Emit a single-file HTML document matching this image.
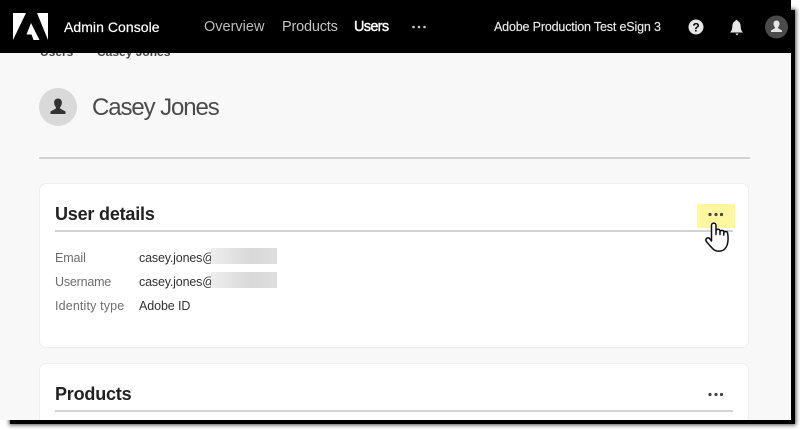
<!DOCTYPE html>
<html><head><meta charset="utf-8"><style>
html,body{margin:0;padding:0;background:#fff}
body{width:800px;height:430px;overflow:hidden;position:relative;font-family:"Liberation Sans",sans-serif}
.t{position:absolute;white-space:nowrap;line-height:1}
.shadow{position:absolute;left:10px;top:10px;width:785px;height:414px;background:#000;box-shadow:0 0 4px 1px rgba(0,0,0,.7)}
.page{position:absolute;left:0;top:0;width:791px;height:420px;background:#f8f8f8;overflow:hidden}
.inner{position:absolute;left:0;top:0;width:791px;height:420px;filter:blur(.35px)}
.hdr{position:absolute;left:0;top:0;width:791px;height:53px;background:#000}
.card{position:absolute;left:39px;width:710px;background:#fff;border:1px solid #eee;border-radius:7px;box-sizing:border-box}
.rule{position:absolute;left:55px;width:678px;background:#d3d3d3}
.l{color:#6e6e6e;font-size:12.5px}.v{color:#333;font-size:12.5px}
.blur{position:absolute;left:211px;width:66px;height:16px;background:linear-gradient(90deg,#eee,#d8d8d8 60%,#dedede)}
svg{position:absolute;overflow:visible}
</style></head><body>
<div class="shadow"></div>
<div class="page"><div class="inner">
<div class="t" style="left:40px;top:46px;font-size:12px;color:#444;font-weight:bold">Users</div>
<div class="t" style="left:97px;top:46px;font-size:12px;color:#444;font-weight:bold">Casey Jones</div>
<div class="hdr"></div>
<svg style="left:0;top:0" width="791" height="53"><path fill="#fff" d="M13 13h13L13 40zM37 13h11v27zM31 23l8.500 17h-6l-2-5.500h-5z"/></svg>
<div class="t" style="left:64px;top:20px;font-size:14px;color:#fff;letter-spacing:.05px;-webkit-text-stroke:.2px #fff">Admin Console</div>
<div class="t" style="left:204px;top:20px;font-size:14.5px;color:#bdbdbd">Overview</div>
<div class="t" style="left:282px;top:20px;font-size:14.5px;color:#c4c4c4;letter-spacing:-.2px">Products</div>
<div class="t" style="left:354px;top:20px;font-size:14.5px;color:#fff;letter-spacing:-.7px;-webkit-text-stroke:.4px #fff">Users</div>
<svg style="left:0;top:0" width="791" height="53"><g fill="#c8c8c8"><circle cx="413.500" cy="27" r="1.300"/><circle cx="419" cy="27" r="1.300"/><circle cx="424.500" cy="27" r="1.300"/></g></svg>
<div class="t" style="left:494px;top:21px;font-size:12.5px;color:#eaeaea;letter-spacing:-.16px;-webkit-text-stroke:.15px #eaeaea">Adobe Production Test eSign 3</div>
<svg style="left:0;top:0" width="791" height="53">
<circle cx="696" cy="27" r="7.500" fill="#e6e6e6"/>
<text x="696" y="31.500" text-anchor="middle" font-family="Liberation Sans" font-weight="bold" font-size="12" fill="#000">?</text>
<path fill="#e6e6e6" d="M730 32.500c2-2 2.200-4 2.400-7 .2-2.500 1.500-4 3-4.500.2-1.600 2-1.600 2.200 0 1.500.5 2.800 2 3 4.500.2 3 .4 5 2.400 7zM735.300 33.500h3.400l-1.700 2z"/>
<circle cx="776.500" cy="27" r="11.500" fill="#4b4b4b"/>
<path fill="#e6e6e6" d="M776.500 20.500c2 0 3 1.500 3 3.300 0 1.500-.7 2.700-1.400 3.500v1l3.900 2.200v1.500h-11v-1.500l3.900-2.200v-1c-.7-.8-1.400-2-1.400-3.500 0-1.800 1-3.300 3-3.300z"/>
</svg>
<svg style="left:0;top:0" width="120" height="130">
<circle cx="58" cy="107" r="19" fill="#d9d9d9"/>
<path fill="#333" d="M58 98.500c2.700 0 3.900 2 3.900 4.300 0 2-1 3.500-1.800 4.500v1.200l5.400 3v2.500h-15v-2.500l5.400-3v-1.200c-.8-1-1.800-2.500-1.800-4.500 0-2.300 1.200-4.300 3.900-4.300z"/>
</svg>
<div class="t" style="left:92px;top:96px;font-size:24px;color:#4b4b4b;letter-spacing:-1.1px">Casey Jones</div>
<div style="position:absolute;left:39px;top:157px;width:711px;height:2px;background:#d2d2d2"></div>

<div class="card" style="top:183px;height:165px"></div>
<div class="t" style="left:55px;top:205px;font-size:18px;color:#222;font-weight:bold;letter-spacing:-.2px">User details</div>
<div class="rule" style="top:230px;height:2px"></div>
<div class="t l" style="left:55px;top:252px;letter-spacing:-.1px">Email</div>
<div class="t v" style="left:139px;top:252px;letter-spacing:-.17px">casey.jones@</div>
<div class="blur" style="top:248px"></div>
<div class="t l" style="left:55px;top:276px;letter-spacing:-.2px">Username</div>
<div class="t v" style="left:139px;top:276px;letter-spacing:-.17px">casey.jones@</div>
<div class="blur" style="top:272px"></div>
<div class="t l" style="left:55px;top:300px;letter-spacing:.15px">Identity type</div>
<div class="t v" style="left:139px;top:300px;letter-spacing:-.1px">Adobe ID</div>

<div style="position:absolute;left:697px;top:204px;width:38px;height:24px;background:#fdf8a0"></div>
<svg style="left:0;top:0" width="791" height="420"><g fill="#444"><circle cx="710" cy="214.500" r="1.600"/><circle cx="716" cy="214.500" r="1.600"/><circle cx="721.500" cy="214.500" r="1.600"/></g>
<path fill="#fff" stroke="#111" stroke-width="1.500" stroke-linejoin="round" d="M711.500 241v-15.500c0-3.200 4.500-3.200 4.500 0v9-3.500c0-2.400 4-2.400 4 0v3.500-2.500c0-2.200 3.800-2.200 3.800 0v3-2c0-2 3.600-2 3.800 0 .6 3.500.6 9-.6 12.500-1.200 2.800-3.200 5-6.200 5.500-3.400.5-6 0-8-2.200-2.400-2.500-4.600-5-6.400-7.300-1.700-2.200.9-4.500 2.900-3.300z"/></svg>

<div class="card" style="top:363px;height:80px"></div>
<div class="t" style="left:55px;top:385px;font-size:18px;color:#222;font-weight:bold;letter-spacing:-.2px">Products</div>
<div class="rule" style="top:410px;height:2px"></div>
<svg style="left:0;top:0" width="791" height="420"><g fill="#444"><circle cx="710" cy="394.500" r="1.600"/><circle cx="716" cy="394.500" r="1.600"/><circle cx="721.500" cy="394.500" r="1.600"/></g></svg>
</div></div>
</body></html>
